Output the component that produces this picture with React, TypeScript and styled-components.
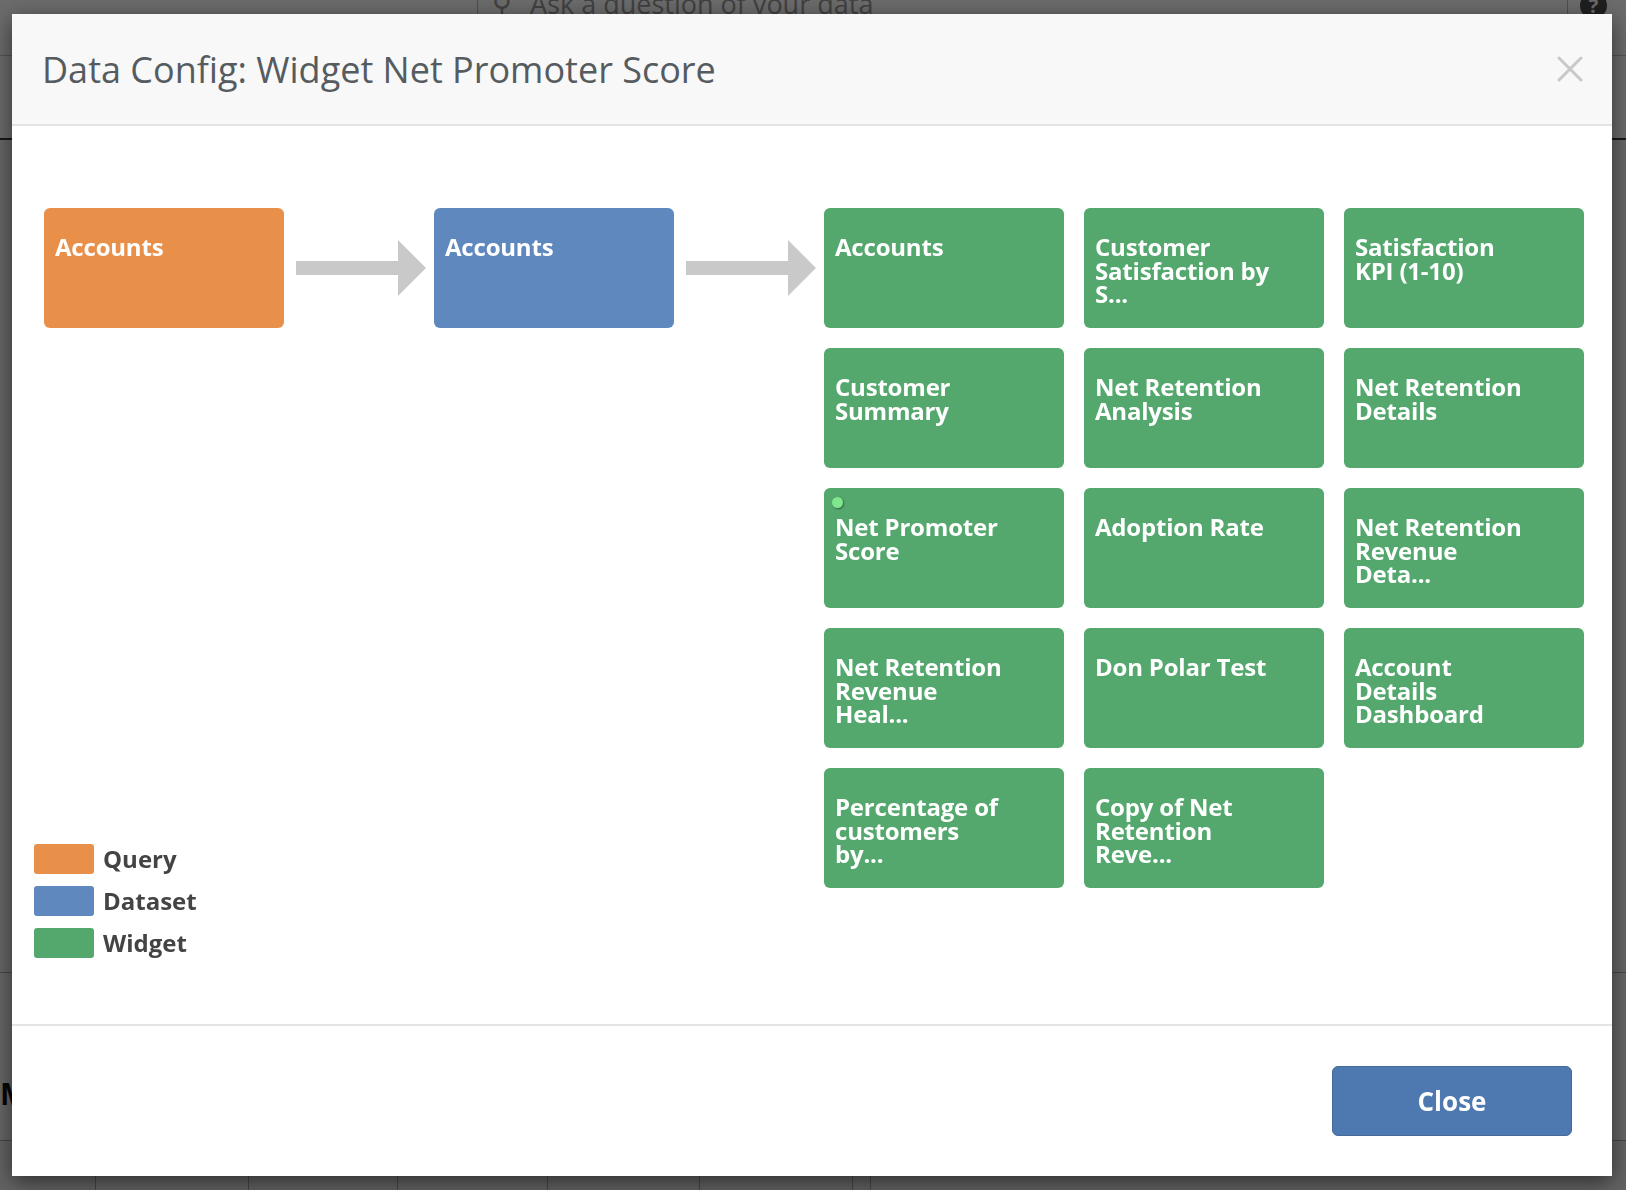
import { FC } from "react";
import styled, { createGlobalStyle } from "styled-components";

const GlobalStyle = createGlobalStyle`
    html, body {
        margin: 0;
        padding: 0;
        width: 1626px;
        height: 1190px;
        overflow: hidden;
        font-family: "Open Sans", "Liberation Sans", sans-serif;
        background: #ffffff;
    }
    * {
        box-sizing: border-box;
    }
`;

const COLORS = {
    query: "#e8904a",
    dataset: "#5f88bf",
    widget: "#54a86d",
};

type Kind = keyof typeof COLORS;

/* ---------- background app (under the overlay) ---------- */

const AppShell = styled.div`
    width: 1626px;
    height: 1190px;
    display: flex;
    flex-direction: column;
    background: #f4f4f4;
`;

const TopBar = styled.div`
    height: 56px;
    display: flex;
    align-items: flex-start;
    background: #ffffff;
    border-bottom: 1px solid #c8c8c8;
`;

const SearchBox = styled.div`
    margin-left: 477px;
    width: 1091px;
    height: 56px;
    display: flex;
    align-items: flex-start;
    gap: 18px;
    padding-left: 14px;
    border-left: 1px solid #bbbbbb;
    border-right: 1px solid #bbbbbb;
    color: #9a9a9a;
    font-size: 27px;
    line-height: 27px;

    span {
        margin-top: -10px;
    }
`;

const HelpIcon = styled.div`
    margin-left: 12px;
    margin-top: -8px;
    width: 27px;
    height: 27px;
    border-radius: 50%;
    background: #4a4a4a;
    color: #ffffff;
    font-weight: 700;
    font-size: 20px;
    line-height: 27px;
    text-align: center;
`;

const SubBar = styled.div`
    height: 84px;
    border-bottom: 2px solid #3a3a3a;
    background: #ffffff;
`;

const AppContent = styled.div`
    flex: 1;
    display: flex;
    flex-direction: column;
    justify-content: flex-end;
`;

const AppHeading = styled.div`
    padding: 100px 0 26px 0;
    font-size: 30px;
    font-weight: 700;
    color: #111;
    border-top: 1px solid #aaa;
`;

const TableHead = styled.div`
    height: 50px;
    display: flex;
    border-top: 1px solid #aaa;
    background: #ececec;
`;

const TableCell = styled.div<{ $w: number }>`
    width: ${({ $w }) => $w}px;
    border-right: 1px solid #a8a8a8;
`;

/* ---------- overlay + modal ---------- */

const Overlay = styled.div`
    position: fixed;
    inset: 0;
    background: rgba(0, 0, 0, 0.58);
    padding: 14px 0 0 12px;
`;

const Modal = styled.div`
    width: 1600px;
    height: 1162px;
    display: flex;
    flex-direction: column;
    background: #ffffff;
    box-shadow: 0 6px 22px rgba(0, 0, 0, 0.55);
`;

const Header = styled.div`
    height: 112px;
    flex-shrink: 0;
    display: flex;
    align-items: center;
    justify-content: space-between;
    padding: 0 29px 0 30px;
    background: #f8f8f8;
    border-bottom: 2px solid #e4e4e4;
`;

const Title = styled.h2`
    margin: 0;
    font-size: 36px;
    font-weight: 400;
    color: #555b5f;
`;

const CloseX = styled.button`
    width: 26px;
    height: 26px;
    padding: 0;
    border: none;
    background: transparent;
    cursor: pointer;
    display: flex;
`;

const Body = styled.div`
    flex: 1;
    display: flex;
    padding: 82px 28px 66px 22px;
`;

const LeftPane = styled.div`
    flex: 1;
    display: flex;
    flex-direction: column;
    justify-content: space-between;
`;

const Pipeline = styled.div`
    display: flex;
    align-items: flex-start;
    padding-left: 10px;
`;

const ArrowSlot = styled.div`
    width: 150px;
    height: 120px;
    display: flex;
    align-items: center;
    padding-left: 12px;
`;

const Node = styled.div<{ $kind: Kind }>`
    position: relative;
    width: 240px;
    height: 120px;
    flex-shrink: 0;
    border-radius: 6px;
    background: ${({ $kind }) => COLORS[$kind]};
    padding: 27px 11px 0 11px;
    color: #ffffff;
    font-weight: 700;
    font-size: 24px;
    line-height: 23.5px;
    letter-spacing: -0.2px;
`;

const Line = styled.div`
    white-space: nowrap;
`;

const ActiveDot = styled.span`
    position: absolute;
    left: 8px;
    top: 9px;
    width: 11px;
    height: 11px;
    border-radius: 50%;
    background: #7fe88e;
    box-shadow: 1px 1px 2px rgba(0, 0, 0, 0.4);
`;

const WidgetGrid = styled.div`
    display: grid;
    grid-template-columns: repeat(3, 240px);
    grid-auto-rows: 120px;
    gap: 20px;
    align-content: start;
`;

const Legend = styled.div`
    display: flex;
    flex-direction: column;
    gap: 12px;
`;

const LegendItem = styled.div`
    display: flex;
    align-items: center;
    gap: 9px;
    height: 30px;
    line-height: 30px;
    font-size: 24px;
    font-weight: 700;
    color: #444444;
`;

const Swatch = styled.span<{ $kind: Kind }>`
    width: 60px;
    height: 30px;
    border-radius: 3px;
    background: ${({ $kind }) => COLORS[$kind]};
`;

const Footer = styled.div`
    flex-shrink: 0;
    display: flex;
    justify-content: flex-end;
    padding: 40px 40px 40px 0;
    border-top: 2px solid #e4e4e4;
`;

const PrimaryButton = styled.button`
    width: 240px;
    height: 70px;
    border-radius: 6px;
    border: 1px solid #47699a;
    background: #4d78b0;
    color: #ffffff;
    font-family: "Open Sans", "Liberation Sans", sans-serif;
    font-size: 26px;
    font-weight: 700;
    cursor: pointer;
`;

const Arrow: FC = () => (
    <svg width="130" height="56" viewBox="0 0 130 56">
        <rect x="0" y="21" width="103" height="14" fill="#c9c9c9" />
        <polygon points="102,0 130,28 102,56" fill="#c9c9c9" />
    </svg>
);

const widgets: { lines: string[]; active?: boolean }[] = [
    { lines: ["Accounts"] },
    { lines: ["Customer", "Satisfaction by", "S..."] },
    { lines: ["Satisfaction", "KPI (1-10)"] },
    { lines: ["Customer", "Summary"] },
    { lines: ["Net Retention", "Analysis"] },
    { lines: ["Net Retention", "Details"] },
    { lines: ["Net Promoter", "Score"], active: true },
    { lines: ["Adoption Rate"] },
    { lines: ["Net Retention", "Revenue", "Deta..."] },
    { lines: ["Net Retention", "Revenue", "Heal..."] },
    { lines: ["Don Polar Test"] },
    { lines: ["Account", "Details", "Dashboard"] },
    { lines: ["Percentage of", "customers", "by..."] },
    { lines: ["Copy of Net", "Retention", "Reve..."] },
];

const legend: { kind: Kind; label: string }[] = [
    { kind: "query", label: "Query" },
    { kind: "dataset", label: "Dataset" },
    { kind: "widget", label: "Widget" },
];

const App: FC = () => {
    return (
        <>
            <GlobalStyle />
            <AppShell>
                <TopBar>
                    <SearchBox>
                        <span>⚲</span>
                        <span>Ask a question of your data</span>
                    </SearchBox>
                    <HelpIcon>?</HelpIcon>
                </TopBar>
                <SubBar />
                <AppContent>
                    <AppHeading>M</AppHeading>
                    <TableHead>
                        {[96, 153, 149, 150, 152, 153, 18].map((w, i) => (
                            <TableCell key={i} $w={w} />
                        ))}
                    </TableHead>
                </AppContent>
            </AppShell>

            <Overlay>
                <Modal>
                    <Header>
                        <Title>Data Config: Widget Net Promoter Score</Title>
                        <CloseX aria-label="close">
                            <svg width="26" height="26" viewBox="0 0 26 26">
                                <path
                                    d="M2 2 L24 24 M24 2 L2 24"
                                    stroke="#c8c8c8"
                                    strokeWidth="3"
                                    strokeLinecap="round"
                                />
                            </svg>
                        </CloseX>
                    </Header>

                    <Body>
                        <LeftPane>
                            <Pipeline>
                                <Node $kind="query">
                                    <Line>Accounts</Line>
                                </Node>
                                <ArrowSlot>
                                    <Arrow />
                                </ArrowSlot>
                                <Node $kind="dataset">
                                    <Line>Accounts</Line>
                                </Node>
                                <ArrowSlot>
                                    <Arrow />
                                </ArrowSlot>
                            </Pipeline>
                            <Legend>
                                {legend.map((l) => (
                                    <LegendItem key={l.kind}>
                                        <Swatch $kind={l.kind} />
                                        {l.label}
                                    </LegendItem>
                                ))}
                            </Legend>
                        </LeftPane>
                        <WidgetGrid>
                            {widgets.map((w, i) => (
                                <Node key={i} $kind="widget">
                                    {w.active && <ActiveDot />}
                                    {w.lines.map((line) => (
                                        <Line key={line}>{line}</Line>
                                    ))}
                                </Node>
                            ))}
                        </WidgetGrid>
                    </Body>

                    <Footer>
                        <PrimaryButton>Close</PrimaryButton>
                    </Footer>
                </Modal>
            </Overlay>
        </>
    );
};

export default App;
